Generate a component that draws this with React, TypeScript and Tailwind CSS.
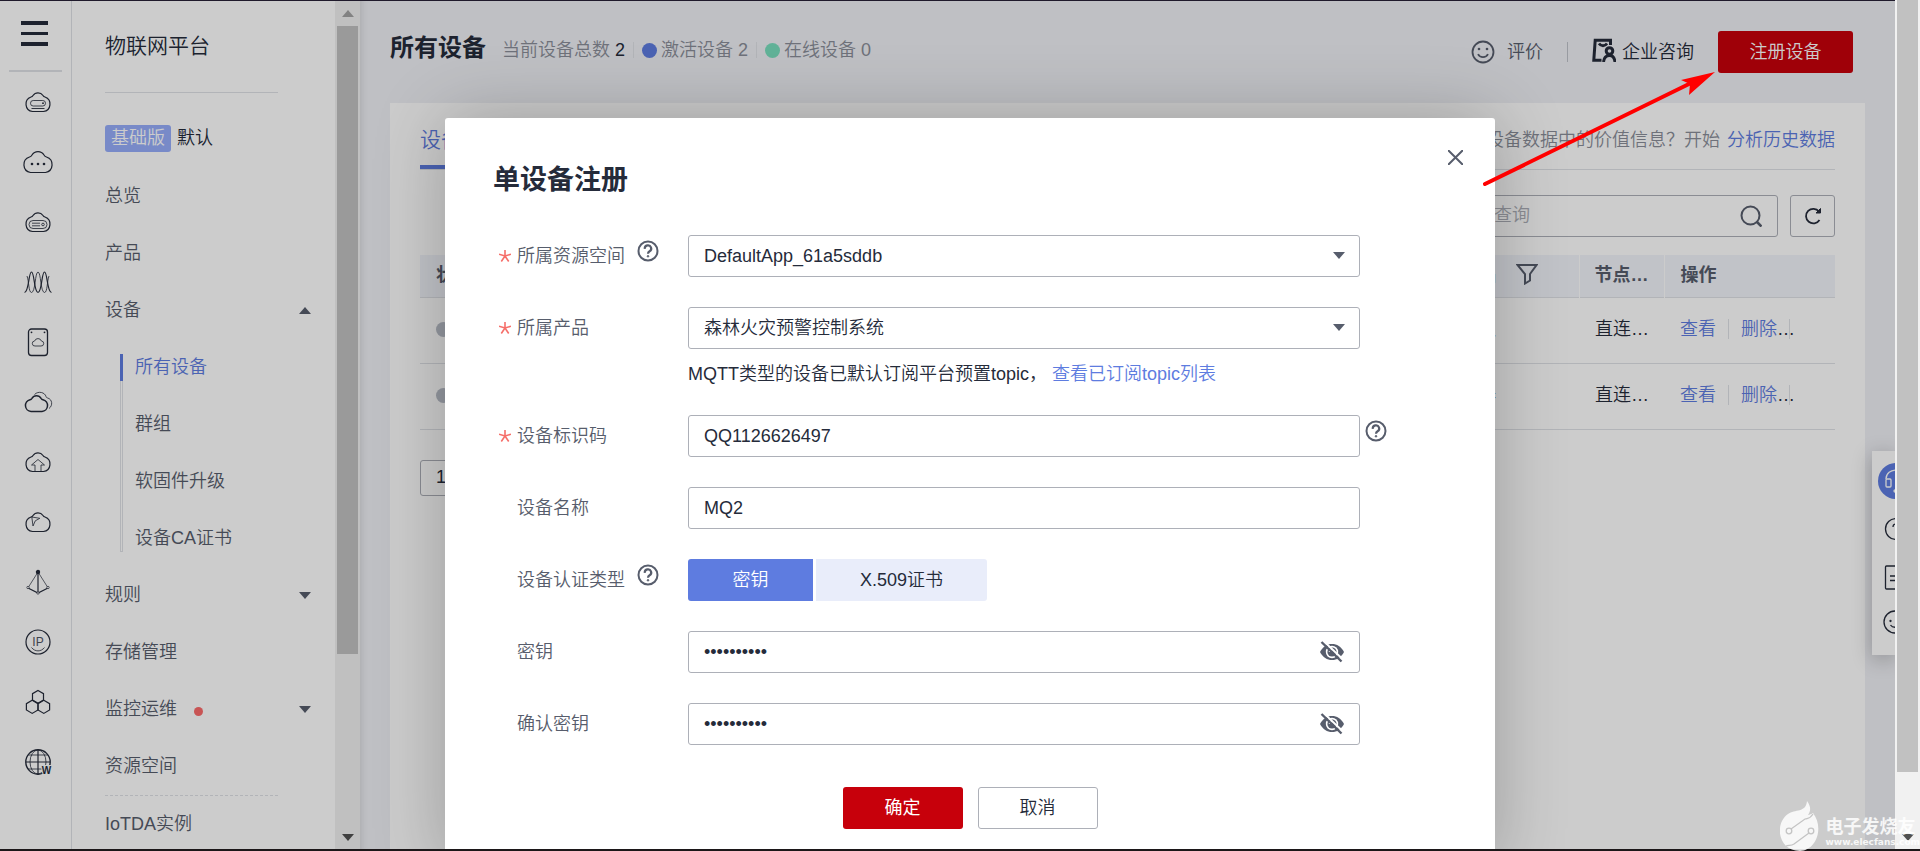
import { ReactNode } from 'react'
import { clsx } from 'clsx'

const FONT = 'font-["Liberation_Sans","Noto_Sans_CJK_SC",sans-serif]'

const cloud =
  'M8.500 21.500a7.500 7.500 0 0 1-1.500-14.500c1-.2 1.500-.6 2-1.500a6 6 0 0 1 10 0c.5.9 1 1.300 2 1.500a7.500 7.500 0 0 1-1.500 14.500Z'

const railIcons: ReactNode[] = [
  <>
    <path d={cloud} />
    <rect x="6.500" y="10.500" width="15" height="5.500" rx="2.700" strokeWidth="0.8" />
    <circle cx="19" cy="13.200" r="0.900" fill="currentColor" stroke="none" />
    <path d="M7.500 18.500h13" strokeWidth="0.9" />
  </>,
  <>
    <path d="M6.500 22.500a8 8 0 0 1-1-15.500c1.200-.3 1.800-.8 2.500-2a7 7 0 0 1 12 0c.7 1.200 1.300 1.700 2.500 2a8 8 0 0 1-1 15.500Z" />
    <g fill="currentColor" stroke="none">
      <circle cx="8" cy="14" r="1.300" />
      <circle cx="14" cy="14" r="1.300" />
      <circle cx="20" cy="14" r="1.300" />
    </g>
  </>,
  <>
    <path d={cloud} />
    <rect x="5" y="10.500" width="18" height="8" rx="4" strokeWidth="0.8" />
    <path d="M8 13.200h8M8 15.800h8" strokeWidth="0.8" />
    <circle cx="19" cy="14.500" r="1.300" strokeWidth="0.8" />
  </>,
  <>
    <path d="M.5 22.500C5 22.500 4.500 2 7.500 2S10 22.500 14 22.500" />
    <path d="M7.500 22.500C11.500 22.500 11 2 14 2s2.500 20.500 6.500 20.500" strokeWidth="0.8" />
    <path d="M14 22.500c4 0 3.500-20.500 6.500-20.500S23 22.500 27.500 22.500" />
    <path d="M3 6c2 5 1.500 16.500 4.500 16.500M25 6c-2 5-1.500 16.500-4.500 16.500" strokeWidth="0.8" />
  </>,
  <>
    <rect x="4.500" y="-1" width="19" height="26.500" rx="3" strokeWidth="1.300" />
    <circle cx="7.500" cy="2.300" r="0.900" fill="currentColor" stroke="none" />
    <circle cx="20.500" cy="2.300" r="0.900" fill="currentColor" stroke="none" />
    <path d="M11 16a2.500 2.500 0 0 1-.4-5 3.600 3.600 0 0 1 6.800 0 2.500 2.500 0 0 1-.4 5Z" strokeWidth="0.8" />
  </>,
  <>
    <path d="M7 21.500a6 6 0 0 1-1-11.800c.9-.2 1.400-.6 1.900-1.400a5.300 5.300 0 0 1 9.200 0c.5.8 1 1.200 1.900 1.400a6 6 0 0 1-1 11.800Z" strokeWidth="1.500" />
    <path d="M10.500 4.500c4-4 10.500-2 11.500 2 .3 1 .8 1.300 1.700 1.500 4.500 1.200 5.500 7.500 1.300 10.500" strokeWidth="0.8" />
  </>,
  <>
    <path d={cloud} />
    <path d="M11 21v-6H7.500L14 9.500l6.500 5.500H17v6" strokeWidth="0.8" />
  </>,
  <>
    <path d={cloud} />
    <path d="m7.800 7 8 1.300-4.500 2.500L9 16Z" strokeWidth="0.8" />
  </>,
  <>
    <circle cx="14" cy="2" r="1.600" fill="currentColor" />
    <path d="M14 2v20" />
    <path d="M14 2 4.500 17M14 2l9.500 15" strokeWidth="0.7" />
    <path d="M4 18l10 5 10-5" />
    <circle cx="4" cy="17.500" r="1.200" fill="#fff" strokeWidth="0.7" />
    <circle cx="24" cy="17.500" r="1.200" fill="#fff" strokeWidth="0.7" />
    <circle cx="14" cy="23" r="1.200" fill="#fff" strokeWidth="0.7" />
  </>,
  <>
    <circle cx="14" cy="12" r="12" />
    <text x="14" y="15.500" fontSize="12" textAnchor="middle" fill="currentColor" stroke="none" opacity="0.8">
      IP
    </text>
    <path d="M7.500 17.500c3.500 4.500 9.500 4.500 13 0" strokeWidth="0.8" />
  </>,
  <>
    <path d="m14 .5 5.500 3.200v6.300L14 13.200 8.500 10V3.700Z" />
    <path d="m8.200 10.300 5.800 3.400v6.300l-5.800 3.400L2.400 20v-6.300Z" />
    <path d="m19.800 10.300 5.800 3.400v6.300l-5.800 3.400L14 20v-6.300Z" />
  </>,
  <>
    <circle cx="14" cy="12" r="12.200" strokeWidth="1.400" />
    <path d="M14 0v24M2 12h24" />
    <ellipse cx="14" cy="12" rx="8" ry="12" strokeWidth="0.8" />
    <path d="M4 5h20M4 19h14" strokeWidth="0.8" />
    <text x="22.500" y="23.500" fontSize="10" fontWeight="bold" textAnchor="middle" fill="currentColor" stroke="#fff" strokeWidth="2" paintOrder="stroke">
      W
    </text>
  </>,
]

const Caret: React.FC<{ up?: boolean; className?: string }> = ({ up = false, className }) => (
  <svg width="12" height="7" viewBox="0 0 12 7" fill="currentColor" className={className}>
    <path d={up ? 'M6 0l6 7H0z' : 'M0 0h12L6 7z'} />
  </svg>
)

const HelpIcon: React.FC<{ label: string }> = ({ label }) => (
  <button type="button" aria-label={label} className="flex text-[#575d6c]">
    <svg width="22" height="22" viewBox="0 0 22 22" fill="none" stroke="currentColor" strokeWidth="2">
      <circle cx="11" cy="11" r="9.500" />
      <path d="M7.800 8.800a3.200 3.200 0 1 1 4.800 2.500c-1.100.7-1.600 1.200-1.600 2.500" strokeWidth="2.200" />
      <circle cx="11" cy="16.300" r="0.800" fill="currentColor" strokeWidth="1" />
    </svg>
  </button>
)

const EyeOff = () => (
  <svg width="24" height="22" viewBox="0 0 24 22" fill="none">
    <path d="M0 11C3 5.500 7 3 12 3s9 2.500 12 8c-3 5.500-7 8-12 8S3 16.500 0 11Z" fill="#575d6c" />
    <circle cx="12" cy="11" r="6.200" fill="#fff" />
    <circle cx="12" cy="11" r="4.600" fill="#575d6c" />
    <path d="M9.500 11a2.600 2.600 0 0 1 2.600-2.600" stroke="#fff" strokeWidth="1.500" />
    <path d="M3.500 0 23.500 19" stroke="#fff" strokeWidth="2" />
    <path d="m1.500 1 20 19.500" stroke="#575d6c" strokeWidth="2.400" />
  </svg>
)

const Smiley: React.FC<{ className?: string }> = ({ className }) => (
  <svg width="24" height="24" viewBox="0 0 24 24" fill="none" stroke="currentColor" strokeWidth="1.800" className={className}>
    <circle cx="12" cy="12" r="10.500" />
    <path d="M7 14.200c2 4 8 4 10 0" />
    <circle cx="8" cy="9" r="1.300" fill="currentColor" stroke="none" />
    <circle cx="16" cy="9" r="1.300" fill="currentColor" stroke="none" />
  </svg>
)

const Rail = () => (
  <nav className="flex w-18 shrink-0 flex-col border-r border-[#dfe1e6] bg-white pl-[9px] text-[#252b3a]">
    <button aria-label="菜单" className="mt-5 ml-3 flex h-[25px] w-[27px] flex-col justify-between">
      <span className="h-1 w-full bg-[#252b3a]" />
      <span className="h-[3px] w-full bg-[#252b3a]" />
      <span className="h-1 w-full bg-[#252b3a]" />
    </button>
    <div className="mt-6 h-0.5 w-[53px] bg-[#dfe1e6]" />
    <div className="flex flex-col">
      {railIcons.map((icon, i) => (
        <a key={i} href="#" className="flex h-15 w-[58px] items-center justify-center">
          <svg width="28" height="24" viewBox="0 0 28 24" fill="none" stroke="currentColor" strokeWidth="1.200" className="overflow-visible">
            {icon}
          </svg>
        </a>
      ))}
    </div>
  </nav>
)

const MenuRow: React.FC<{ label: string; open?: boolean; arrow?: boolean; dot?: boolean }> = ({
  label,
  open,
  arrow,
  dot,
}) => (
  <a href="#" className="flex h-[57px] items-center pr-6">
    <span>{label}</span>
    {dot && <span className="mt-1 ml-[17px] h-[9px] w-[9px] rounded-full bg-[#fa6a6a]" />}
    {arrow && <Caret up={open} className="ml-auto" />}
  </a>
)

const subMenu = ['所有设备', '群组', '软固件升级', '设备CA证书']

const SideMenu = () => (
  <aside className="flex w-[263px] shrink-0 flex-col overflow-hidden bg-white pl-[33px] text-[18px] text-[#575d6c]">
    <h2 className="mr-[57px] h-[92px] shrink-0 border-b border-[#dfe1e6] pt-[29px] text-[21px] leading-8 text-[#252b3a]">
      物联网平台
    </h2>
    <div className="mt-8 flex h-[27px] shrink-0 items-center gap-1.5 text-[#252b3a]">
      <span className="rounded-[3px] bg-[#96adfa] px-1.5 leading-[27px] text-white">基础版</span>
      <span>默认</span>
    </div>
    <div className="mt-4">
      <MenuRow label="总览" />
      <MenuRow label="产品" />
      <MenuRow label="设备" arrow open />
      <ul className="ml-[15px] flex flex-col">
        {subMenu.map((name, i) => (
          <li key={name} className={clsx('flex h-[57px]', i === 3 ? 'items-start' : 'items-center')}>
            <span
              className={clsx(
                'flex w-[3px] shrink-0 flex-col border-x border-[#dfe1e6]',
                i === 0 && 'h-[42px] self-end',
                i > 0 && i < 3 && 'h-full',
                i === 3 && 'h-[42px] border-b'
              )}
            >
              {i === 0 && <span className="-mx-px h-[27px] bg-[#5e7ce0]" />}
            </span>
            <a href="#" className={clsx('ml-3 leading-[57px]', i === 0 && 'text-[#5e7ce0]')}>
              {name}
            </a>
          </li>
        ))}
      </ul>
      <MenuRow label="规则" arrow />
      <MenuRow label="存储管理" />
      <MenuRow label="监控运维" arrow dot />
      <MenuRow label="资源空间" />
      <div className="mr-[57px] border-t border-dashed border-[#dfe1e6]" />
      <MenuRow label="IoTDA实例" />
    </div>
  </aside>
)

const SideScrollbar = () => (
  <div className="flex w-[25px] shrink-0 flex-col bg-[#f1f1f1] px-0.5 text-[#505050]">
    <div className="flex h-[25px] items-center justify-center">
      <Caret up className="text-[#a3a3a3]" />
    </div>
    <div className="h-[628px] w-[21px] bg-[#c1c1c1]" />
    <div className="mt-auto mb-2 flex justify-center">
      <Caret />
    </div>
  </div>
)

const PageHeader = () => (
  <header className="flex h-[102px] items-start pt-[29px] pr-[42px] pl-[30px] text-[18px] text-[#8a8e99]">
    <div className="flex h-10 items-center">
      <h1 className="mb-1 text-[24px] leading-8 font-bold text-[#252b3a]">所有设备</h1>
      <p className="ml-4">
        当前设备总数 <span className="text-[#252b3a]">2</span>
      </p>
      <span className="mx-2 h-4 w-px bg-[#dfe1e6]" />
      <span className="mr-1 h-[15px] w-[15px] rounded-full bg-[#5e7ce0]" />
      激活设备 2
      <span className="mx-2 h-4 w-px bg-[#dfe1e6]" />
      <span className="mr-1 h-[15px] w-[15px] rounded-full bg-[#7adfbf]" />
      在线设备 0
    </div>
    <div className="ml-auto flex h-11 items-center">
      <a href="#" className="flex items-center gap-3 text-[#575d6c]">
        <Smiley />
        评价
      </a>
      <span className="mx-6 h-5 w-px bg-[#bfc2ca]" />
      <a href="#" className="flex items-center gap-1.5 text-[#252b3a]">
        <svg width="24" height="24" viewBox="0 0 24 24" fill="none" stroke="currentColor" strokeWidth="3" className="-mt-1">
          <path d="M9.500 22.200H1.800L3.200 2.200H18.500V7" />
          <path d="M7 5.500c2 3 6 3 8 0" strokeWidth="2.800" />
          <circle cx="17.500" cy="13" r="3.300" />
          <path d="M11.500 24c.5-4.500 3-6.500 6-6.500s5 2 5.500 6.500" />
        </svg>
        企业咨询
      </a>
      <button className="ml-6 h-[42px] w-[135px] rounded-[3px] bg-[#c7000b] text-white">注册设备</button>
    </div>
  </header>
)

const devices = ['智能门锁', '温控仪器']

const DeviceTable = () => (
  <table className="mt-[18px] w-full table-fixed text-left">
    <colgroup>
      <col />
      <col className="w-[171px]" />
      <col className="w-[85px]" />
      <col className="w-[171px]" />
    </colgroup>
    <thead>
      <tr className="h-[42px] border-b border-[#dfe1e6] bg-[#f2f4fb] text-[#575d6c]">
        <th className="px-4">状态</th>
        <th className="px-4">
          <span className="flex items-center gap-5">
            所属产品
            <svg width="22" height="22" viewBox="0 0 22 22" fill="none" stroke="currentColor" strokeWidth="2" className="-mt-1">
              <path d="M1.500 2h19L14 11v6.500L9 20.500V11Z" />
            </svg>
          </span>
        </th>
        <th className="border-x border-white pl-[15px] whitespace-nowrap">节点…</th>
        <th className="px-4">操作</th>
      </tr>
    </thead>
    <tbody>
      {devices.map((name) => (
        <tr key={name} className="h-[66px] border-b border-[#dfe1e6] text-[#252b3a]">
          <td className="px-4 pb-0.5">
            <span className="block h-[15px] w-[15px] rounded-full bg-[#babfc9]" />
          </td>
          <td className="px-4 pb-0.5">{name}</td>
          <td className="px-4 pb-0.5 whitespace-nowrap">直连…</td>
          <td className="px-4 pb-0.5">
            <span className="flex items-center">
              <a href="#" className="text-[#5e7ce0]">
                查看
              </a>
              <span className="mx-3 h-5 w-px bg-[#dfe1e6]" />
              <a href="#" className="text-[#5e7ce0]">
                删除
              </a>
              …
              <span className="-ml-1.5 h-5 w-px bg-[#dfe1e6]" />
            </span>
          </td>
        </tr>
      ))}
    </tbody>
  </table>
)

const DevicePanel = () => (
  <section className="mx-[30px] flex-1 bg-white px-[30px] text-[18px]">
    <div className="flex h-[67px] items-center justify-between border-b border-[#dfe1e6] pt-2">
      <a href="#" className="self-stretch border-b-4 border-[#5e7ce0] pt-[13px] text-[21px] leading-8 text-[#5e7ce0]">
        设备列表
      </a>
      <p className="text-[#8a8e99]">
        想要挖掘设备数据中的价值信息？开始{' '}
        <a href="#" className="ml-0.5 text-[#5e7ce0]">
          分析历史数据
        </a>
      </p>
    </div>
    <div className="mt-[25px] flex justify-end gap-3">
      <div className="relative">
        <input
          aria-label="查询"
          placeholder="请输入设备名称查询"
          className="h-[42px] w-[426px] rounded-[3px] border border-[#adb0b8] px-[15px] pb-0.5 placeholder:text-[#adb0b8]"
        />
        <svg width="22" height="22" viewBox="0 0 22 22" fill="none" stroke="#575d6c" strokeWidth="2" className="absolute top-2.5 right-4">
          <circle cx="10.500" cy="10.500" r="9" />
          <path d="m16.500 16.500 5 5" strokeWidth="2.600" />
        </svg>
      </div>
      <button aria-label="刷新" className="flex h-[42px] w-[45px] items-center justify-center rounded-[3px] border border-[#adb0b8]">
        <svg width="18" height="18" viewBox="0 0 18 18" fill="none" stroke="#252b3a" strokeWidth="1.800">
          <path d="M15.500 13a7.300 7.300 0 1 1-.5-8.500" />
          <path d="M16.500 1.500V6H12Z" fill="#252b3a" strokeWidth="1" />
        </svg>
      </button>
    </div>
    <DeviceTable />
    <select aria-label="每页条数" defaultValue="10" className="mt-[30px] h-9 w-20 appearance-none rounded-[3px] border border-[#adb0b8] px-[15px] text-[#252b3a]">
      <option>10</option>
    </select>
  </section>
)

const FloatTools = () => (
  <div className="absolute top-[450px] right-0 flex h-[204px] w-[23px] flex-col overflow-visible shadow-[0_4px_20px_rgba(0,0,0,0.25)]">
    <div className="h-full w-full overflow-hidden bg-white text-[#252b3a]">
      <svg width="60" height="204" viewBox="0 0 60 204" fill="none" stroke="currentColor" strokeWidth="1.300">
        <circle cx="24" cy="30" r="18" fill="#5e7ce0" stroke="none" />
        <g stroke="#fff">
          <path d="M14 28c0-12 20-12 20 0" />
          <rect x="14" y="28" width="5" height="8" rx="1" />
          <circle cx="23" cy="40" r="1" fill="#fff" />
        </g>
        <circle cx="24" cy="78" r="10.500" />
        <path d="M21 76c0-4 6-4 6 0 0 2-3 2.500-3 5" />
        <rect x="13.500" y="115" width="20" height="23" rx="1" />
        <path d="M18 125h12M18 129.500h12" />
        <circle cx="23" cy="171" r="11" />
        <circle cx="18.500" cy="170" r="0.500" fill="currentColor" />
        <path d="M18.500 174c2 3 7 3 9 0" />
      </svg>
    </div>
  </div>
)

type FieldProps = {
  label: string
  id?: string
  required?: boolean
  help?: boolean
  trailing?: ReactNode
  children: ReactNode
}

const Field: React.FC<FieldProps> = ({ label, id, required, help, trailing, children }) => (
  <div className="flex">
    <div className="flex h-[42px] w-[195px] shrink-0 items-center">
      <span className="flex w-6 justify-center">
        {required && (
          <svg width="12" height="12" viewBox="0 0 12 12" stroke="#f66f6a" strokeWidth="1.600">
            <path d="M6 0v6M0 4.200l6 1.800 6-1.800M6 6l-3.700 5.500M6 6l3.700 5.500" fill="none" />
          </svg>
        )}
      </span>
      <label htmlFor={id} className="text-[#575d6c]">
        {label}
      </label>
      {help && (
        <span className="ml-3 self-start pt-[5px]">
          <HelpIcon label={`${label}说明`} />
        </span>
      )}
    </div>
    <div className="w-[672px]">{children}</div>
    {trailing && <span className="pt-[5px] pl-[5px]">{trailing}</span>}
  </div>
)

const inputClass = 'block h-[42px] w-full rounded-[3px] border border-[#adb0b8] bg-white px-[15px] text-[#252b3a]'

const Select: React.FC<{ id: string; value: string }> = ({ id, value }) => (
  <div className="relative">
    <select id={id} defaultValue={value} className={`${inputClass} appearance-none`}>
      <option>{value}</option>
    </select>
    <Caret className="pointer-events-none absolute top-[17px] right-[15px] text-[#575d6c]" />
  </div>
)

const Secret: React.FC<{ id: string }> = ({ id }) => (
  <div className="relative">
    <input id={id} type="password" defaultValue="1234567890" className={inputClass} />
    <button type="button" aria-label="显示" className="absolute top-2.5 right-4">
      <EyeOff />
    </button>
  </div>
)

const RegisterDialog = () => (
  <div
    role="dialog"
    aria-labelledby="dialog-title"
    className="relative mt-[117px] flex w-[1050px] flex-col rounded-[3px] bg-white pt-11 pl-12 text-[18px] text-[#252b3a] shadow-[0_0_72px_rgba(0,0,0,0.24)]"
  >
    <button aria-label="关闭" className="absolute top-8 right-8">
      <svg width="15" height="15" viewBox="0 0 15 15" stroke="#575d6c" strokeWidth="2">
        <path d="m0 0 15 15M15 0 0 15" />
      </svg>
    </button>
    <h2 id="dialog-title" className="text-[27px] leading-9 font-bold">
      单设备注册
    </h2>
    <form className="mt-[37px] flex flex-col gap-[30px]">
      <Field label="所属资源空间" id="space" required help>
        <Select id="space" value="DefaultApp_61a5sddb" />
      </Field>
      <Field label="所属产品" id="product" required>
        <Select id="product" value="森林火灾预警控制系统" />
        <p className="mt-[14px] leading-[22px]">
          MQTT类型的设备已默认订阅平台预置topic，{' '}
          <a href="#" className="text-[#5e7ce0]">
            查看已订阅topic列表
          </a>
        </p>
      </Field>
      <Field label="设备标识码" id="code" required trailing={<HelpIcon label="设备标识码说明" />}>
        <input id="code" defaultValue="QQ1126626497" className={inputClass} />
      </Field>
      <Field label="设备名称" id="name">
        <input id="name" defaultValue="MQ2" className={inputClass} />
      </Field>
      <Field label="设备认证类型" help>
        <div className="flex gap-[3px]">
          <button type="button" className="h-[42px] w-[125px] rounded-l-[3px] bg-[#5e7ce0] text-white">
            密钥
          </button>
          <button type="button" className="h-[42px] w-[171px] rounded-r-[3px] bg-[#e9edfa]">
            X.509证书
          </button>
        </div>
      </Field>
      <Field label="密钥" id="secret">
        <Secret id="secret" />
      </Field>
      <Field label="确认密钥" id="confirm">
        <Secret id="confirm" />
      </Field>
    </form>
    <div className="mt-[42px] flex justify-center gap-[15px] pr-12 pb-10">
      <button className="h-[42px] w-30 rounded-[3px] bg-[#c7000b] font-normal text-white">确定</button>
      <button className="h-[42px] w-30 rounded-[3px] border border-[#adb0b8] bg-white">取消</button>
    </div>
  </div>
)

const Watermark = () => (
  <div className="pointer-events-none absolute right-0 bottom-0 flex items-end gap-1.5 text-white/85">
    <svg width="40" height="50" viewBox="0 0 40 50">
      <path d="M27 0c5 7 3 11 1 14 4-1 5-2 5-2 11 14 4 37-13 38C-2 50-6 23 8 13 15 8 26 12 27 0Z" fill="currentColor" />
      <g fill="none" stroke="#c4c4c4" strokeWidth="1.300">
        <circle cx="9" cy="30" r="2.800" />
        <path d="M11 28 25 18c3-1 5 0 8-5" />
        <circle cx="31" cy="30" r="2.800" />
        <path d="M29 32 14 43c-3 2-5 1-8 2" />
      </g>
    </svg>
    <div className="pb-1">
      <div className="text-[18px] leading-5 font-bold">电子发烧友</div>
      <div className="font-['DejaVu_Sans'] text-[9px] leading-[10px] font-bold">www.elecfans.com</div>
    </div>
  </div>
)

export default function App() {
  return (
    <div className={`${FONT} relative flex h-screen flex-col overflow-hidden bg-white font-[350]`}>
      <div className="flex min-h-0 flex-1">
        <div className="relative flex min-w-0 flex-1 overflow-hidden border-t border-[#1f1a2b]">
          <Rail />
          <SideMenu />
          <SideScrollbar />
          <main className="flex min-w-0 flex-1 flex-col bg-[#eff0f5] shadow-[inset_8px_0_8px_-8px_rgba(0,0,0,0.15)]">
            <PageHeader />
            <DevicePanel />
          </main>
          <FloatTools />
          <div className="absolute inset-0 flex items-start justify-center overflow-hidden bg-black/20 pl-[45px]">
            <RegisterDialog />
          </div>
          <svg width="232" height="116" viewBox="0 0 232 116" className="absolute top-[69px] right-[180px]">
            <path d="M2 114 208 13" stroke="#f00" strokeWidth="4" strokeLinecap="round" />
            <path d="m232 2-34 8 9 4-1 11Z" fill="#f00" stroke="none" />
          </svg>
        </div>
        <div className="flex w-[25px] shrink-0 flex-col bg-[#f1f1f1] px-0.5">
          <div className="h-[772px] w-[21px] bg-[#c1c1c1]" />
          <div className="mt-auto mb-2 flex justify-center">
            <Caret className="text-[#505050]" />
          </div>
        </div>
      </div>
      <div className="h-0.5 shrink-0 bg-[#1c1719]" />
      <Watermark />
    </div>
  )
}
